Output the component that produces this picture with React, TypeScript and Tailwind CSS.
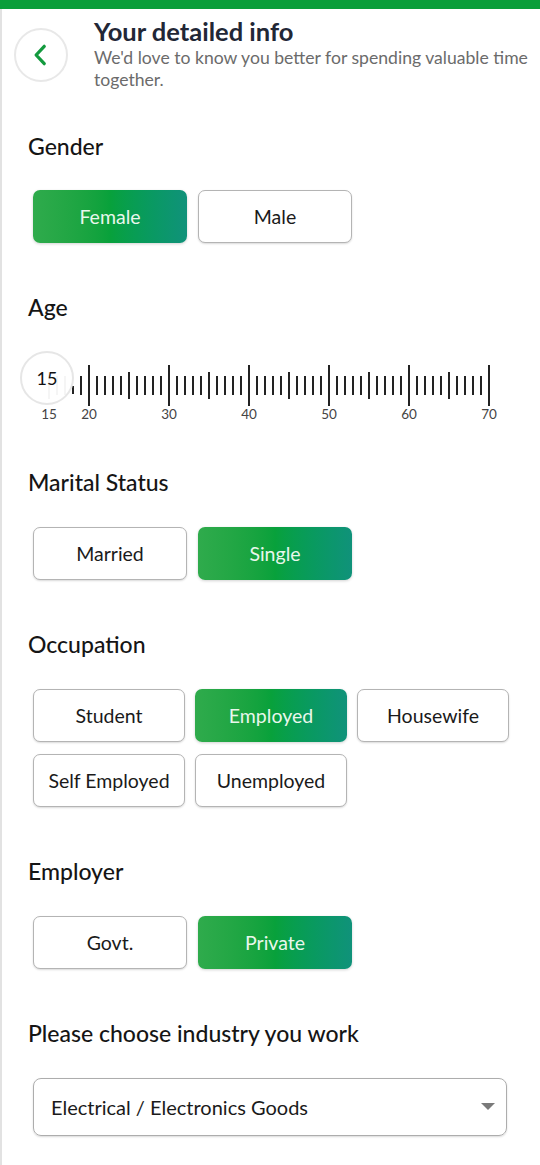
import { useState } from 'react'

const font = { fontFamily: 'Lato, "Open Sans", sans-serif' }

function Choice({ label, active, onClick, width = 'w-[154px]' }: { label: string; active: boolean; onClick: () => void; width?: string }) {
  return (
    <button
      onClick={onClick}
      className={
        active
          ? `${width} h-[53px] rounded-[7px] bg-linear-to-r from-[#2fab4c] via-[#08a13b] to-[#10927a] text-[19.5px] text-[#e9f7ec] shadow-[0_1px_3px_rgba(0,0,0,0.18)]`
          : `${width} h-[53px] rounded-[7px] border-[1.5px] border-[#b4b4b4] bg-white text-[19.5px] text-[#1a1a1a] shadow-[0_1px_2px_rgba(0,0,0,0.15)]`
      }
    >
      {label}
    </button>
  )
}

function Heading({ children }: { children: React.ReactNode }) {
  return <h2 className="pl-[26px] text-[23px] leading-[28px] font-medium text-[#151515]">{children}</h2>
}

function AgeRuler() {
  const ticks = []
  for (let v = 15; v <= 70; v++) {
    const x = 49 + (v - 15) * 8
    let y1 = 376
    let y2 = 395
    if (v % 10 === 0) {
      y1 = 365
      y2 = 406
    } else if (v % 5 === 0) {
      y1 = 372
      y2 = 399
    }
    const faded = v < 18
    ticks.push(
      <line key={v} x1={x} x2={x} y1={v === 18 ? 386 : y1} y2={v === 18 ? 394 : y2} stroke={faded ? '#d6d6d6' : '#222'} strokeWidth={2} />
    )
  }
  const labels = [15, 20, 30, 40, 50, 60, 70]
  return (
    <div className="relative h-[90px]">
      <svg width={540} height={90} viewBox="0 340 540 90" className="block">
        {ticks}
        {labels.map((l) => (
          <text key={l} x={49 + (l - 15) * 8} y={419} textAnchor="middle" fontSize={13.5} fill="#444" style={font}>
            {l}
          </text>
        ))}
      </svg>
      <div className="absolute left-[20px] top-[11px] flex h-[54px] w-[54px] items-center justify-center rounded-full border-2 border-[#e6e6e6] bg-white/75 text-[18px] text-[#111]">
        15
      </div>
    </div>
  )
}

export default function App() {
  const [gender, setGender] = useState('Female')
  const [marital, setMarital] = useState('Single')
  const [occupation, setOccupation] = useState('Employed')
  const [employer, setEmployer] = useState('Private')

  return (
    <div className="h-[1165px] w-[540px] overflow-hidden bg-white" style={font}>
      <div className="h-[9px] bg-[#0a9e3a]" />
      <div className="h-[1156px] border-l-2 border-[#e2e2e2]">
        <div className="flex pt-[8px]">
          <div className="ml-[12px] mt-[11px] flex h-[54px] w-[54px] shrink-0 items-center justify-center rounded-full border-2 border-[#e8e8e8]">
            <svg width="26" height="26" viewBox="0 0 24 24" fill="none" stroke="#139a3e" strokeWidth="3" strokeLinecap="round" strokeLinejoin="round">
              <path d="M15 4l-7.5 8 7.5 8" />
            </svg>
          </div>
          <div className="ml-[26px]">
            <h1 className="text-[25.5px] leading-[28px] font-bold text-[#222736]">Your detailed info</h1>
            <p className="mt-[2px] text-[17.6px] leading-[22px] text-[#6b6b6b]">We'd love to know you better for spending valuable time together.</p>
          </div>
        </div>

        <div className="mt-[41px]">
          <Heading>Gender</Heading>
          <div className="mt-[30px] flex gap-[11px] pl-[31px]">
            {['Female', 'Male'].map((g) => (
              <Choice key={g} label={g} active={gender === g} onClick={() => setGender(g)} />
            ))}
          </div>
        </div>

        <div className="mt-[50px]">
          <Heading>Age</Heading>
          <div className="-ml-[2px] mt-[19px]">
            <AgeRuler />
          </div>
        </div>

        <div className="mt-[38px]">
          <Heading>Marital Status</Heading>
          <div className="mt-[31px] flex gap-[11px] pl-[31px]">
            {['Married', 'Single'].map((m) => (
              <Choice key={m} label={m} active={marital === m} onClick={() => setMarital(m)} />
            ))}
          </div>
        </div>

        <div className="mt-[50px]">
          <Heading>Occupation</Heading>
          <div className="mt-[31px] flex w-[520px] flex-wrap gap-x-[10px] gap-y-[12px] pl-[31px]">
            {['Student', 'Employed', 'Housewife', 'Self Employed', 'Unemployed'].map((o) => (
              <Choice key={o} label={o} width="w-[152px]" active={occupation === o} onClick={() => setOccupation(o)} />
            ))}
          </div>
        </div>

        <div className="mt-[50px]">
          <Heading>Employer</Heading>
          <div className="mt-[31px] flex gap-[11px] pl-[31px]">
            {['Govt.', 'Private'].map((e) => (
              <Choice key={e} label={e} active={employer === e} onClick={() => setEmployer(e)} />
            ))}
          </div>
        </div>

        <div className="mt-[50px]">
          <Heading>Please choose industry you work</Heading>
          <div className="ml-[31px] mt-[31px] flex h-[58px] w-[474px] items-center justify-between rounded-[8px] border-[1.5px] border-[#adadad] pl-[17px] pr-[11px] shadow-[0_1px_2px_rgba(0,0,0,0.15)]">
            <span className="text-[20px] text-[#1a1a1a]">Electrical / Electronics Goods</span>
            <svg width="14" height="8" viewBox="0 0 14 8">
              <path d="M0 0h14L7 7z" fill="#7a7a7a" />
            </svg>
          </div>
        </div>
      </div>
    </div>
  )
}
